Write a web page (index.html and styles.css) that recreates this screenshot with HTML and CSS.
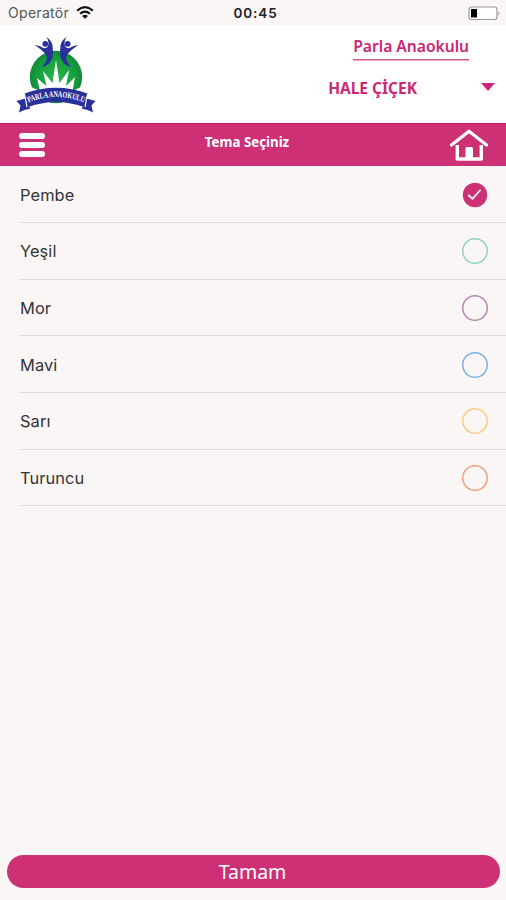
FILE: index.html
```html
<!DOCTYPE html>
<html lang="tr">
<head>
<meta charset="utf-8">
<meta name="viewport" content="width=device-width">
<title>Tema Seçiniz</title>
<link rel="stylesheet" href="styles.css">
</head>
<body>
<div class="status">
  <div class="carrier"><span>Operatör</span>
    <svg class="wifi" width="18" height="13" viewBox="0 0 18 13"><g fill="none" stroke="#111" stroke-width="2.1"><path d="M1.2 4.6Q9-2.2 16.8 4.6"/><path d="M4.1 7.8Q9 3.6 13.9 7.8"/></g><path d="M6 10Q9 7.6 12 10L9 12.8z" fill="#111"/></svg>
  </div>
  <time class="clock">00:45</time>
  <svg class="battery" width="33" height="15" viewBox="0 0 33 15"><rect x="1" y="1" width="28" height="12.5" rx="2.5" fill="#fff" stroke="#999" stroke-width="1.2"/><rect x="3" y="3" width="6" height="8.5" fill="#000"/><path d="M30.5 5v4.500q2-2.200 0-4.500" fill="#999"/></svg>
</div>
<header class="header">
  <svg class="logo" width="82" height="78" viewBox="0 0 82 78">
    <defs>
      <radialGradient id="globe"><stop offset="0" stop-color="#28b34a"/><stop offset=".7" stop-color="#16a03d"/><stop offset="1" stop-color="#128a38"/></radialGradient>
      <path id="ribbonline" d="M12.500 67Q41 54.500 73 68"/>
    </defs>
    <circle cx="41" cy="41" r="26.200" fill="url(#globe)"/>
    <path d="M16 51L25 55 22 42 31.500 50 28 35 37.500 47 41 24 44.500 47 54 34 51 50 60 41 57.500 55 66 51 62 61Q41 50 20 61z" fill="#fff"/>
    <g fill="#29309a">
      <g id="dancer"><circle cx="30.300" cy="7.800" r="2.900"/><path d="M19.500 9Q25 9.500 28.500 12Q33.500 13 33.500 6.500Q33 3.500 31.500 1Q38 5 37.800 13Q38.500 22 35.500 25Q34 29 27 31Q31.500 26 32 21.500Q30.500 17 27 14.500Q23.500 11.500 19.500 9z"/></g>
      <use href="#dancer" transform="translate(83 0) scale(-1 1)"/>
      <path d="M12 62L1.500 65 5.500 69.500 4 76.500Q10 73 15 73z"/>
      <path d="M70 62L80.500 65 76.500 69.500 78 76.500Q72 73 67 73z"/>
      <path d="M9.500 57.500Q41 46 72.500 57.500L70 71.500Q41 60.500 12 71.500z"/>
    </g>
    <path d="M9.500 58L12 71M72.500 58L70 71" stroke="#fff" stroke-width="1.200"/>
    <text class="ribbon-text" fill="#fff"><textPath href="#ribbonline" startOffset="1" textLength="57" lengthAdjust="spacingAndGlyphs">PARLA ANAOKULU</textPath></text>
  </svg>
  <div class="account">
    <a class="school">Parla Anaokulu</a>
    <div class="child"><span class="name">HALE ÇİÇEK</span><span class="caret"></span></div>
  </div>
</header>
<nav class="nav">
  <div class="menu"><i></i><i></i><i></i></div>
  <h1 class="title">Tema Seçiniz</h1>
  <svg class="home" width="40" height="34" viewBox="0 0 40 34"><path d="M2.500 17L20 3.200 37.500 17" fill="none" stroke="#fff" stroke-width="3.200" stroke-linecap="round" stroke-linejoin="round"/><path d="M8.300 17V31H32.300V17" fill="none" stroke="#fff" stroke-width="3.400" stroke-linejoin="round"/><path d="M16.500 32V20.500q0-1.500 1.500-1.500h4.500q1.500 0 1.500 1.500V32z" fill="#fff"/></svg>
</nav>
<main class="list">
  <div class="row"><span>Pembe</span><svg class="dot" width="26" height="26" viewBox="0 0 26 26"><circle cx="13" cy="13" r="12.200" fill="#cd3075"/><path d="M6.300 13L10.500 16.700 18.600 7.800" fill="none" stroke="#fff" stroke-width="1.700"/></svg></div>
  <div class="row"><span>Yeşil</span><b class="dot ring green"></b></div>
  <div class="row"><span>Mor</span><b class="dot ring purple"></b></div>
  <div class="row"><span>Mavi</span><b class="dot ring blue"></b></div>
  <div class="row"><span>Sarı</span><b class="dot ring yellow"></b></div>
  <div class="row"><span>Turuncu</span><b class="dot ring orange"></b></div>
</main>
<button class="confirm"><span>Tamam</span></button>
</body>
</html>
```
FILE: styles.css
```css
* { box-sizing: border-box; }
body { margin: 0; height: 900px; display: flex; flex-direction: column; background: #faf6f5; font-family: Inter, "Liberation Sans", sans-serif; color: #333; overflow: hidden; }
.status { height: 25px; display: grid; grid-template-columns: 1fr auto 1fr; align-items: center; padding: 1px 5px 0 8px; }
.carrier { display: flex; align-items: center; gap: 7px; font-size: 14px; letter-spacing: .3px; color: #555; margin-top: -1px; }
.clock { font-size: 13.5px; font-weight: 600; letter-spacing: .9px; color: #222; padding-left: 2px; }
.battery { justify-self: end; }
.header { height: 98px; background: #fff; display: flex; justify-content: space-between; padding: 11px 11px 0 15px; }
.account { display: flex; flex-direction: column; align-items: flex-end; font-family: "Noto Sans", sans-serif; font-weight: 600; font-size: 15.6px; line-height: 20px; color: #cb2774; }
.school { margin-right: 26px; height: 23px; box-shadow: 0 1.5px #d45a91; white-space: nowrap; }
.child { display: flex; align-items: center; gap: 64px; margin-top: 19px; }
.name { font-size: 15.5px; font-weight: 700; }
.caret { border: solid transparent; border-width: 8px 7px 0; border-top-color: #cb2774; margin-top: -3px; }
.ribbon-text { font: bold 8.5px "Liberation Serif", serif; }
.nav { height: 43.4px; background: #cd3075; border-top: 1px solid #c51c69; display: grid; grid-template-columns: 1fr auto 1fr; padding: 0 17px 0 19px; }
.menu { display: flex; flex-direction: column; gap: 3px; padding-top: 9px; }
.menu i { width: 26px; height: 6px; border-radius: 3px; background: #fff; }
.title { position: relative; left: -7px; margin: 7px 0 0; font: 700 13.3px/22px "Noto Sans", sans-serif; color: #fff; }
.home { justify-self: end; margin-top: 4px; }
.list { flex: 1; padding: 0 0 0 20px; }
.row { height: 56.65px; border-bottom: 1px solid #dfdbda; display: flex; align-items: center; justify-content: space-between; padding: 1px 18px 0 0; font-size: 16.4px; letter-spacing: .1px; }
.dot { width: 26px; height: 26px; flex: none; }
.ring { border-radius: 50%; box-shadow: inset 0 0 0 1.5px currentColor; }
.green { color: #8bd3bc; }
.purple { color: #b387af; }
.blue { color: #78b1e7; }
.yellow { color: #f5cd7e; }
.orange { color: #eda17d; }
.confirm { height: 33px; margin: 0 6px 12px 7px; padding: 0 2px 0 0; border: 0; border-radius: 17px; background: #cd3075; color: #fff; font: 400 19.500px/32px "Noto Sans", sans-serif; }
```
